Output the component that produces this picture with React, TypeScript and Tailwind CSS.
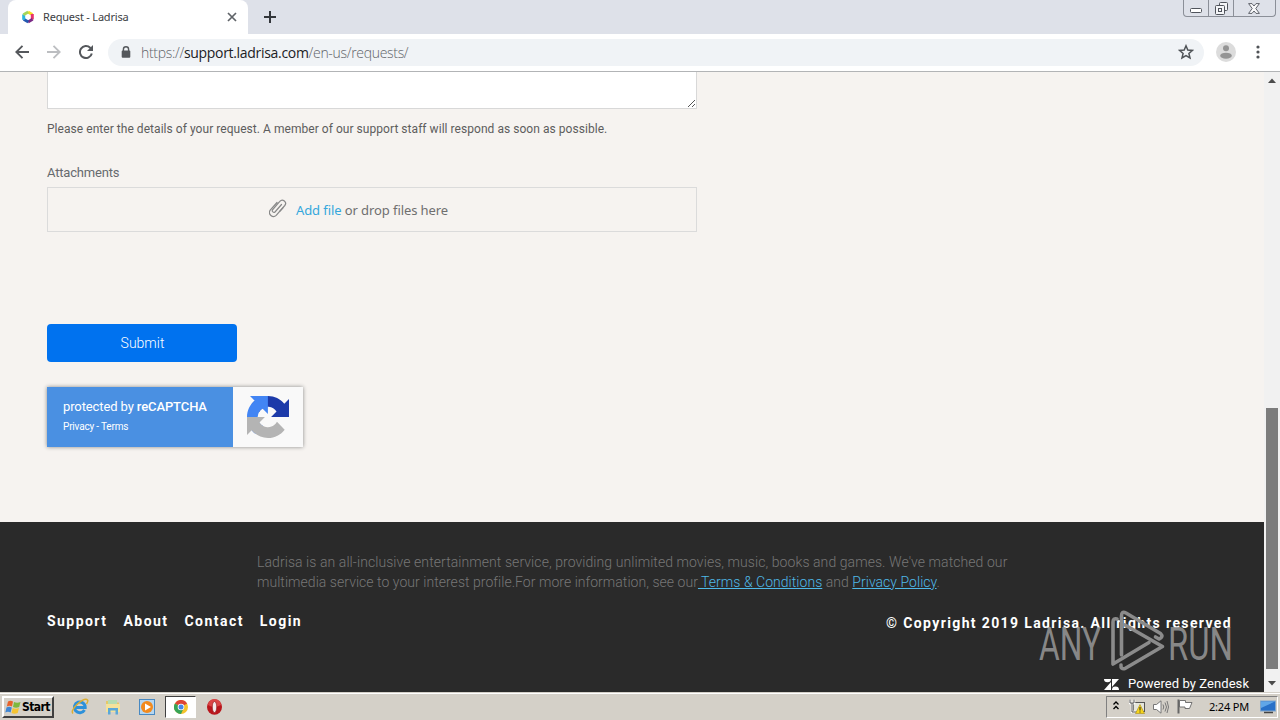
import React from "react";

function Favicon() {
  return (
    <svg className="h-[14px] w-[14px]" viewBox="0 0 14 14" fill="none" strokeWidth="3">
      <path d="M7 2 L11.3 4.5" stroke="#f3dc25" />
      <path d="M11.3 4 V9.5" stroke="#e8336b" />
      <path d="M11.6 9.3 L7 12" stroke="#7a2a86" />
      <path d="M7.3 12 L2.7 9.3" stroke="#2458b0" />
      <path d="M2.7 9.8 V4.4" stroke="#28b5dd" />
      <path d="M2.4 4.7 L7.2 2" stroke="#a4d65a" />
    </svg>
  );
}

function TabStrip() {
  return (
    <div className="flex h-[34px] bg-[#dee1e9]">
      <div className="ml-2 flex h-[34px] w-[240px] items-center rounded-t-[8px] bg-white pl-[13px] pr-[11px]">
        <Favicon />
        <span className="ml-[8px] whitespace-nowrap font-['Noto_Sans',sans-serif] text-[11px] tracking-[-0.2px] text-[#3c4043]">Request - Ladrisa</span>
        <svg className="ml-auto h-[10px] w-[10px]" viewBox="0 0 10 10" stroke="#5f6368" strokeWidth="1.7"><path d="M1 1 L9 9 M9 1 L1 9" /></svg>
      </div>
      <svg className="ml-[16px] mt-[11px] h-[12px] w-[12px]" viewBox="0 0 12 12" stroke="#33363b" strokeWidth="2"><path d="M6 0 V12 M0 6 H12" /></svg>
      <div className="ml-auto mr-[4px] flex h-[17px] w-[93px] rounded-b-[4px] border border-t-0 border-[#8b8f98]">
        <div className="flex w-[25px] items-end justify-center border-r border-[#8b8f98] pb-[3px]">
          <svg className="h-[5px] w-[12px]" viewBox="0 0 12 5"><rect x=".5" y=".5" width="11" height="4" rx="1" fill="#fff" stroke="#50545c" /></svg>
        </div>
        <div className="flex w-[25px] items-center justify-center border-r border-[#8b8f98]">
          <svg className="h-[13px] w-[13px]" viewBox="0 0 13 13" fill="#f4f5f8" stroke="#50545c"><rect x="4.5" y=".5" width="8" height="8" rx="1" /><rect x=".5" y="3.5" width="9" height="9" rx="1" /><rect x="3.5" y="6.5" width="3" height="3" /></svg>
        </div>
        <div className="flex flex-1 items-center justify-center pr-[1px]">
          <svg className="h-[11px] w-[12px]" viewBox="0 0 12 11" fill="#f8f8fa" stroke="#50545c" strokeWidth=".9"><path d="M.6.6 H4 L6 3 L8 .6 H11.4 L7.8 5.5 L11.4 10.4 H8 L6 8 L4 10.4 H.6 L4.2 5.5 Z" /></svg>
        </div>
      </div>
    </div>
  );
}

function Toolbar() {
  return (
    <div className="flex h-[38px] items-center border-b border-[#b2b4b6] bg-white pb-[1px] pl-[15px] pr-[20px]">
      <svg className="h-[14px] w-[14px]" viewBox="0 0 14 14" fill="none" stroke="#55585c" strokeWidth="1.9"><path d="M14 7 H1.5 M7.5 .8 L1.3 7 L7.5 13.2" /></svg>
      <svg className="ml-[18px] h-[14px] w-[14px]" viewBox="0 0 14 14" fill="none" stroke="#bcbec1" strokeWidth="1.8"><path d="M0 7 H12.5 M6.5 .8 L12.7 7 L6.5 13.2" /></svg>
      <svg className="ml-[18px] h-[14px] w-[14px]" viewBox="0 0 14 14" fill="none" stroke="#55585c" strokeWidth="2"><path d="M12.8 8.5 A6 6 0 1 1 11.2 2.8 L12.5 4" /><path d="M14 0 V6 H8 Z" fill="#55585c" stroke="none" /></svg>
      <div className="ml-[15px] flex h-[27px] flex-1 items-center rounded-full bg-[#f0f3f6] pl-[13px] pr-[10px]">
        <svg className="h-[12px] w-[10px]" viewBox="0 0 10 12"><path d="M2.4 5 V3.4 A2.6 2.6 0 0 1 7.6 3.4 V5" fill="none" stroke="#55585c" strokeWidth="1.4" /><rect x=".7" y="4.4" width="8.6" height="7.4" rx="1" fill="#55585c" /></svg>
        <span className="ml-[10px] whitespace-nowrap font-['Open_Sans',sans-serif] text-[14px] font-light tracking-[-0.31px] text-[#5f6368]">
          https://<span className="font-normal text-[#202124]">support.ladrisa.com</span>/en-us/requests/
        </span>
        <svg className="ml-auto h-[16px] w-[16px]" viewBox="0 0 16 16" fill="none" stroke="#4f5357" strokeWidth="1.5"><path d="M8 1.8 L9.8 6 L14.4 6.4 L10.9 9.4 L12 13.9 L8 11.5 L4 13.9 L5.1 9.4 L1.6 6.4 L6.2 6 Z" /></svg>
      </div>
      <svg className="ml-[12px] h-[20px] w-[20px]" viewBox="0 0 20 20"><circle cx="10" cy="10" r="10" fill="#dcdcdc" /><circle cx="10" cy="6.2" r="3" fill="#949494" /><ellipse cx="10" cy="13.7" rx="5.8" ry="3" fill="#949494" /></svg>
      <svg className="ml-[20px] h-[14px] w-[4px]" viewBox="0 0 4 14" fill="#505357"><circle cx="2" cy="2" r="1.6" /><circle cx="2" cy="7" r="1.6" /><circle cx="2" cy="12" r="1.6" /></svg>
    </div>
  );
}

function RecaptchaLogo() {
  return (
    <svg className="h-[42px] w-[42px]" viewBox="0 0 64 64">
      <path fill="#1c3aa9" d="M64 31.955l-.033-1.37V4.687l-7.16 7.16C50.948 4.674 42.033.093 32.05.093c-10.4 0-19.622 4.96-25.458 12.64l11.736 11.86a15.55 15.55 0 0 1 4.754-5.334c2.05-1.6 4.952-2.906 8.968-2.906.485 0 .86.057 1.135.163 4.976.393 9.288 3.14 11.828 7.124l-8.307 8.307L64 31.953" />
      <path fill="#4285f4" d="M31.862.094l-1.37.033H4.594l7.16 7.16C4.58 13.147 0 22.06 0 32.046c0 10.4 4.96 19.622 12.64 25.458L24.5 45.768a15.55 15.55 0 0 1-5.334-4.754c-1.6-2.05-2.906-4.952-2.906-8.968 0-.485.057-.86.163-1.135.393-4.976 3.14-9.288 7.124-11.828l8.307 8.307L31.86.095" />
      <path fill="#b4b4b4" d="M.001 32.045l.033 1.37v25.898l7.16-7.16c5.86 7.173 14.774 11.754 24.76 11.754 10.4 0 19.622-4.96 25.458-12.64l-11.736-11.86a15.55 15.55 0 0 1-4.754 5.334c-2.05 1.6-4.952 2.906-8.968 2.906-.485 0-.86-.057-1.135-.163-4.976-.393-9.288-3.14-11.828-7.124l8.307-8.307L0 32.046" />
    </svg>
  );
}

function RequestForm() {
  return (
    <div className="flex h-[450px] flex-col items-start bg-[#f6f3f0] pl-[47px]">
      <div className="flex h-[37px] w-[650px] items-end justify-end border border-t-0 border-[#d8d8d8] bg-white">
        <svg className="h-[9px] w-[9px]" viewBox="0 0 9 9" stroke="#555" strokeWidth="1"><path d="M1 8 L8 1 M5 8 L8 5" /></svg>
      </div>
      <p className="mt-[12px] h-[16px] whitespace-nowrap font-[Roboto,sans-serif] text-[12px] leading-[16px] tracking-[0.045px] text-[#5d5d5d]">
        Please enter the details of your request. A member of our support staff will respond as soon as possible.
      </p>
      <p className="mt-[28px] h-[16px] whitespace-nowrap font-[Roboto,sans-serif] text-[13px] leading-[16px] tracking-[-0.18px] text-[#666a6e]">Attachments</p>
      <div className="mt-[6px] flex h-[45px] w-[650px] items-center border border-[#dbdbdb] pl-[221px]">
        <svg className="mb-[2px] h-[19px] w-[18px]" viewBox="0 0 18 19" fill="none" stroke="#888" strokeWidth="1.2" strokeLinecap="round">
          <path d="M12.5 5.5 L6 13 A1.7 1.7 0 0 1 3.5 10.8 L10.8 2.4 A3.2 3.2 0 0 1 15.8 6.5 L7.2 16.4 A4 4 0 0 1 1.2 11.2 L8 3.5" />
          <path d="M14 8.8 L11 12" />
        </svg>
        <span className="ml-[9px] mt-[2px] whitespace-nowrap font-['Noto_Sans',sans-serif] text-[13px] tracking-[-0.09px] text-[#6f6f6f]"><span className="text-[#35a7dc]">Add file</span> or drop files here</span>
      </div>
      <button className="mt-[92px] flex h-[38px] w-[190px] items-center justify-center rounded-[4px] bg-[#0072ef] pl-[1px] font-[Roboto,sans-serif] text-[14px] font-light text-white">Submit</button>
      <div className="mt-[25px] flex h-[60px] w-[256px] shadow-[0_0_4px_#888]">
        <div className="flex w-[186px] flex-col bg-[#4a90e2] pl-[16px] pt-[11px] font-[Roboto,sans-serif] text-white">
          <span className="h-[18px] whitespace-nowrap text-[13px] leading-[18px] tracking-[-0.11px]">protected by <span className="font-medium">reCAPTCHA</span></span>
          <span className="mt-[4px] h-[14px] whitespace-nowrap text-[10px] leading-[14px] tracking-[-0.18px]">Privacy - Terms</span>
        </div>
        <div className="flex w-[70px] items-center justify-center bg-[#f9f9f9]"><RecaptchaLogo /></div>
      </div>
    </div>
  );
}

function Watermark() {
  return (
    <svg className="absolute left-[1036px] top-[608px] h-[66px] w-[204px]" viewBox="0 0 204 66" fill="none">
      <g fill="#999" fillOpacity=".85" fontFamily="Roboto, sans-serif" fontWeight="400" fontSize="47">
        <text x="3" y="51.5" textLength="62" lengthAdjust="spacingAndGlyphs">ANY</text>
        <text x="132" y="51.5" textLength="65" lengthAdjust="spacingAndGlyphs">RUN</text>
      </g>
      <g stroke="#8b8b8b" strokeWidth="3.6" strokeLinejoin="round" strokeLinecap="round">
        <path d="M85.5 47 V8 Q85.5 2.500 90 5 L124.500 25.500 Q128 29 123 31 L119.500 29" />
        <path d="M113 34.500 L77 56 V14 Q77 10 81 11" />
        <path d="M89 17 L126.500 38.500 L89 60.500 Q84.500 61.500 85 57" />
      </g>
    </svg>
  );
}

function Footer() {
  return (
    <div className="flex h-[170px] flex-col bg-[#2a2a2a] pt-[30px] font-[Roboto,sans-serif]">
      <div className="ml-[257px] h-[40px] text-[14px] font-light leading-[20px] text-[#777]">
        <p className="whitespace-nowrap tracking-[0.072px]">Ladrisa is an all-inclusive entertainment service, providing unlimited movies, music, books and games. We've matched our</p>
        <p className="whitespace-nowrap tracking-[0.04px]">multimedia service to your interest profile.For more information, see our<span className="text-[#4fb9e8] underline"> Terms &amp; Conditions</span> and <span className="text-[#4fb9e8] underline">Privacy Policy</span>.</p>
      </div>
      <div className="mt-[19px] flex h-[22px] pl-[47px] pr-[32px] text-[14px] font-bold leading-[20px] text-white">
        <nav className="flex gap-[16px] tracking-[1.45px]"><span>Support</span><span>About</span><span>Contact</span><span>Login</span></nav>
        <span className="ml-auto pt-[2px] tracking-[1.37px]">© Copyright 2019 Ladrisa. All rights reserved</span>
      </div>
      <div className="mt-[43px] flex h-[18px] items-center pl-[1104px] text-white">
        <svg className="h-[11px] w-[15px]" viewBox="0 0 15 11" fill="#fff"><path d="M0 0 H7 A3.5 3.2 0 0 1 0 0 Z M7 3 V11 H0 Z M8 0 H15 L8 8 Z M8 11 A3.500 3.400 0 0 1 15 11 Z" /></svg>
        <span className="ml-[9px] whitespace-nowrap text-[13px] leading-[16px] tracking-[0.07px]">Powered by Zendesk</span>
      </div>
    </div>
  );
}

function Scrollbar() {
  return (
    <div className="flex w-[16px] flex-col items-center bg-[#f1f1f1]">
      <svg className="mt-[6px] h-[5px] w-[8px]" viewBox="0 0 8 5" fill="#4b4b4b"><path d="M0 5 L4 .5 L8 5 Z" /></svg>
      <div className="mt-[325px] h-[261px] w-[12px] bg-[#7c7c7c]" />
      <svg className="mt-[12px] h-[5px] w-[8px]" viewBox="0 0 8 5" fill="#4b4b4b"><path d="M0 0 L4 4.500 L8 0 Z" /></svg>
    </div>
  );
}

function WindowsFlag() {
  return (
    <svg className="h-[14px] w-[16px]" viewBox="0 0 16 14">
      <path d="M3 1.500 Q5.500 0 8 1.500 L7 6.500 Q4.500 5 1.800 6.500 Z" fill="#e8622a" />
      <path d="M9 2 Q12 3.500 15.500 2 L14.200 7 Q11 8.500 8 7 Z" fill="#7eb83e" />
      <path d="M1.500 7.500 Q4 6 6.800 7.500 L5.600 12.500 Q3 11 .3 12.500 Z" fill="#3f86d4" />
      <path d="M7.700 8 Q10.500 9.500 14 8 L12.700 13 Q9.500 14.500 6.500 13 Z" fill="#f5c433" />
    </svg>
  );
}

function Taskbar() {
  return (
    <div className="flex h-[28px] items-center border-t border-[#d4d0c8] bg-[#d4d0c8] pl-[2px] pr-[2px] shadow-[inset_0_1px_0_#fff]">
      <div className="flex h-[22px] w-[52px] items-center border-2 border-b-[#404040] border-l-white border-r-[#404040] border-t-white pl-px">
        <WindowsFlag />
        <span className="ml-px font-['DejaVu_Sans_Condensed','DejaVu_Sans',sans-serif] text-[12px] font-bold leading-none tracking-[-0.6px] text-black">Start</span>
      </div>
      <svg className="ml-[17px] h-[18px] w-[18px]" viewBox="0 0 18 18" fill="none">
        <path d="M13.500 12 A5.400 5.400 0 1 1 14.200 9.500 H5" stroke="#2d91da" strokeWidth="3" />
        <path d="M2 15.500 Q-.5 13 6 6.500 Q14 -.5 16.500 2 Q17.500 3 15.500 6" stroke="#dcae32" strokeWidth="1.500" />
      </svg>
      <svg className="ml-[16px] h-[16px] w-[16px]" viewBox="0 0 16 16">
        <path d="M1 2 H6 L7 3.500 H14 V13 H1 Z" fill="#e5c868" /><path d="M3 1 H12 V6 H3 Z" fill="#b6dcb0" /><path d="M1 5 H15 V13 H1 Z" fill="#f4e29a" />
        <path d="M3 15.500 V9 H13 V15.500 H10.500 V11.500 H5.500 V15.500 Z" fill="#5ba8d8" />
      </svg>
      <svg className="ml-[18px] h-[16px] w-[16px]" viewBox="0 0 16 16"><rect x=".5" y=".5" width="15" height="15" fill="#b5d6f0" stroke="#4889c2" /><circle cx="8" cy="8" r="6" fill="#f28a1d" /><path d="M6 4.500 L12 8 L6 11.500 Z" fill="#fff" /></svg>
      <div className="ml-[10px] flex h-[22px] w-[31px] items-center justify-center border border-b-white border-l-[#404040] border-r-white border-t-[#404040] bg-white">
        <svg className="h-[14px] w-[14px]" viewBox="0 0 14 14"><circle cx="7" cy="7" r="7" fill="#f5c32c" /><path d="M7 7 L.9 3.500 A7 7 0 0 1 13.100 3.500 Z" fill="#de4436" /><path d="M7 7 L.9 3.500 A7 7 0 0 0 7 14 L9.500 8.500 Z" fill="#37a457" /><circle cx="7" cy="7" r="3.300" fill="#fff" /><circle cx="7" cy="7" r="2.500" fill="#4787e8" /></svg>
      </div>
      <svg className="ml-[11px] h-[16px] w-[15px]" viewBox="0 0 15 16"><ellipse cx="7.500" cy="8" rx="7.500" ry="7.800" fill="#b9161c" /><path d="M1 6 A6.500 6 0 0 1 14 6 Q7 10 1 6Z" fill="#db4545" /><ellipse cx="7.500" cy="8" rx="2.200" ry="5.500" fill="#f4eaea" stroke="#8a1014" strokeWidth=".6" /></svg>
      <div className="ml-auto flex h-[22px] w-[172px] items-center border border-b-white border-l-[#808080] border-r-white border-t-[#808080] pl-[6px]">
        <svg className="mb-[2px] h-[9px] w-[6px]" viewBox="0 0 6 9" fill="none" stroke="#000" strokeWidth="1.300"><path d="M.5 3.500 L3 1 L5.500 3.500 M.5 8 L3 5.500 L5.500 8" /></svg>
        <svg className="ml-[10px] h-[15px] w-[16px]" viewBox="0 0 16 15"><rect x="4.500" y="3.500" width="11" height="9" fill="#e6e6dc" stroke="#555" /><path d="M1 .5 V4 H5 V.5 M3 4 V13 H9" fill="none" stroke="#fff" strokeWidth="2.500" /><path d="M1 .5 V4 H5 V.5 M3 4 V13 H9" fill="none" stroke="#555" /><path d="M11 5.500 L15.500 14.500 H6.500 Z" fill="#f6d51c" stroke="#a88b14" strokeWidth=".6" /><path d="M11 8 V11.500 M11 12.500 V13.500" stroke="#222" /></svg>
        <svg className="ml-[8px] h-[14px] w-[16px]" viewBox="0 0 16 14" fill="none" stroke="#777"><path d="M.5 4.500 H3.500 L8 .8 V13.200 L3.500 9.500 H.5 Z" fill="#fff" /><path d="M10 4.500 Q11.500 7 10 9.500 M12 2.500 Q15 7 12 11.500 M14 1 Q17 7 14 13" /></svg>
        <svg className="ml-[8px] h-[15px] w-[16px]" viewBox="0 0 16 15" fill="#fff" stroke="#666"><path d="M1.500 .5 V14.500" strokeWidth="2" /><path d="M2.500 1.500 H8.500 V3.500 H15 L12.500 9.500 H8 V8 H2.500 Z" strokeWidth=".9" /></svg>
        <span className="ml-[16px] whitespace-nowrap font-['Noto_Sans',sans-serif] text-[11px] leading-none tracking-[-0.2px] text-black">2:24 PM</span>
        <svg className="ml-auto mr-[1px] h-[14px] w-[16px]" viewBox="0 0 16 14"><rect x=".5" y="1" width="15" height="10" fill="#2870c8" stroke="#80a6cc" /><path d="M1 1.500 H15 L1 8 Z" fill="#60a6e8" /><path d="M4 12.500 H13" stroke="#444" strokeWidth="1.500" /></svg>
      </div>
    </div>
  );
}

export default function App() {
  return (
    <div className="relative flex h-[720px] w-[1280px] flex-col overflow-hidden">
      <TabStrip />
      <Toolbar />
      <div className="flex h-[620px]">
        <main className="w-[1264px]"><RequestForm /><Footer /></main>
        <Scrollbar />
      </div>
      <Taskbar />
      <Watermark />
    </div>
  );
}
